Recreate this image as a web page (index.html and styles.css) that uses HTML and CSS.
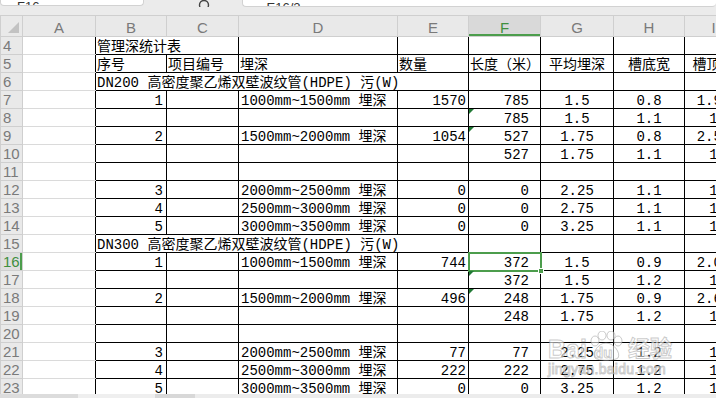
FILE: index.html
```html
<!DOCTYPE html>
<html lang="zh-CN">
<head>
    <meta charset="UTF-8">
    <meta name="viewport" content="width=device-width, initial-scale=1.0">
    <title>管理深统计表</title>
    <link rel="stylesheet" href="styles.css">
</head>
<body>
    <div class="sheet">
        <!-- name box + formula bar, scrolled mostly out of view -->
        <div class="toolbar">
            <div class="namebox"><span>F16</span></div>
            <div class="tools">
                <svg class="fx-icon" width="14" height="14" viewBox="0 0 14 14">
                    <circle cx="6" cy="6" r="4.5" fill="none" stroke="#444" stroke-width="1.4"/>
                    <path d="M9.3 9.3 L13 13" stroke="#444" stroke-width="1.6"/>
                </svg>
            </div>
            <div class="formula"><span>=E16/2</span></div>
        </div>

        <div class="grid-wrap">
            <table class="grid">
                <colgroup>
                    <col class="w-hdr">
                    <col class="w-a">
                    <col class="w-b">
                    <col class="w-c">
                    <col class="w-d">
                    <col class="w-e">
                    <col class="w-f">
                    <col class="w-g">
                    <col class="w-h">
                    <col class="w-i">
                </colgroup>
                <thead>
                    <tr>
                        <th class="corner"></th>
                        <th>A</th>
                        <th>B</th>
                        <th>C</th>
                        <th>D</th>
                        <th>E</th>
                        <th class="active">F</th>
                        <th>G</th>
                        <th>H</th>
                        <th>I</th>
                    </tr>
                </thead>
                <tbody>
                    <tr>
                        <th>4</th><td class="a"></td>
                        <td class="l" colspan="2">管理深统计表</td>
                        <td></td><td></td><td></td><td></td><td></td><td></td>
                    </tr>
                    <tr>
                        <th>5</th><td class="a"></td>
                        <td class="l">序号</td>
                        <td class="l">项目编号</td>
                        <td class="l">埋深</td>
                        <td class="l">数量</td>
                        <td class="l">长度（米）</td>
                        <td class="c">平均埋深</td>
                        <td class="c">槽底宽</td>
                        <td class="c">槽顶宽</td>
                    </tr>
                    <tr>
                        <th>6</th><td class="a"></td>
                        <td class="l" colspan="4">DN200 高密度聚乙烯双壁波纹管(HDPE) 污(W)</td>
                        <td></td><td></td><td></td><td></td>
                    </tr>
                    <tr class="d">
                        <th>7</th><td class="a"></td>
                        <td>1</td><td></td><td>1000mm~1500mm 埋深</td><td>1570</td>
                        <td>785</td><td>1.5</td><td>0.8</td><td>1.95</td>
                    </tr>
                    <tr class="d">
                        <th>8</th><td class="a"></td>
                        <td></td><td></td><td></td><td></td>
                        <td class="note">785</td><td>1.5</td><td>1.1</td><td>1</td>
                    </tr>
                    <tr class="d">
                        <th>9</th><td class="a"></td>
                        <td>2</td><td></td><td>1500mm~2000mm 埋深</td><td>1054</td>
                        <td class="note">527</td><td>1.75</td><td>0.8</td><td>2.55</td>
                    </tr>
                    <tr class="d">
                        <th>10</th><td class="a"></td>
                        <td></td><td></td><td></td><td></td>
                        <td>527</td><td>1.75</td><td>1.1</td><td>1</td>
                    </tr>
                    <tr class="d">
                        <th>11</th><td class="a"></td>
                        <td></td><td></td><td></td><td></td>
                        <td></td><td></td><td></td><td></td>
                    </tr>
                    <tr class="d">
                        <th>12</th><td class="a"></td>
                        <td>3</td><td></td><td>2000mm~2500mm 埋深</td><td>0</td>
                        <td>0</td><td>2.25</td><td>1.1</td><td>1</td>
                    </tr>
                    <tr class="d">
                        <th>13</th><td class="a"></td>
                        <td>4</td><td></td><td>2500mm~3000mm 埋深</td><td>0</td>
                        <td>0</td><td>2.75</td><td>1.1</td><td>1</td>
                    </tr>
                    <tr class="d">
                        <th>14</th><td class="a"></td>
                        <td>5</td><td></td><td>3000mm~3500mm 埋深</td><td>0</td>
                        <td>0</td><td>3.25</td><td>1.1</td><td>1</td>
                    </tr>
                    <tr>
                        <th>15</th><td class="a"></td>
                        <td class="l" colspan="4">DN300 高密度聚乙烯双壁波纹管(HDPE) 污(W)</td>
                        <td></td><td></td><td></td><td></td>
                    </tr>
                    <tr class="d">
                        <th class="active">16</th><td class="a"></td>
                        <td>1</td><td></td><td>1000mm~1500mm 埋深</td><td>744</td>
                        <td class="sel">372</td><td>1.5</td><td>0.9</td><td>2.05</td>
                    </tr>
                    <tr class="d">
                        <th>17</th><td class="a"></td>
                        <td></td><td></td><td></td><td></td>
                        <td class="note">372</td><td>1.5</td><td>1.2</td><td>1</td>
                    </tr>
                    <tr class="d">
                        <th>18</th><td class="a"></td>
                        <td>2</td><td></td><td>1500mm~2000mm 埋深</td><td>496</td>
                        <td class="note">248</td><td>1.75</td><td>0.9</td><td>2.65</td>
                    </tr>
                    <tr class="d">
                        <th>19</th><td class="a"></td>
                        <td></td><td></td><td></td><td></td>
                        <td>248</td><td>1.75</td><td>1.2</td><td>1</td>
                    </tr>
                    <tr class="d">
                        <th>20</th><td class="a"></td>
                        <td></td><td></td><td></td><td></td>
                        <td></td><td></td><td></td><td></td>
                    </tr>
                    <tr class="d">
                        <th>21</th><td class="a"></td>
                        <td>3</td><td></td><td>2000mm~2500mm 埋深</td><td>77</td>
                        <td>77</td><td>2.25</td><td>1.2</td><td>1</td>
                    </tr>
                    <tr class="d">
                        <th>22</th><td class="a"></td>
                        <td>4</td><td></td><td>2500mm~3000mm 埋深</td><td>222</td>
                        <td>222</td><td>2.75</td><td>1.2</td><td>1</td>
                    </tr>
                    <tr class="d">
                        <th>23</th><td class="a"></td>
                        <td>5</td><td></td><td>3000mm~3500mm 埋深</td><td>0</td>
                        <td>0</td><td>3.25</td><td>1.2</td><td>1</td>
                    </tr>
                </tbody>
            </table>

            <!-- jingyan watermark -->
            <div class="watermark">
                <div class="wm-top">
                    <span class="wm-bai">Bai</span>
                    <svg class="wm-paw" width="36" height="30" viewBox="0 0 36 30">
                        <ellipse cx="7" cy="10" rx="4" ry="5" />
                        <ellipse cx="14" cy="4.5" rx="4" ry="4.5" />
                        <ellipse cx="23" cy="4.5" rx="4" ry="4.5" />
                        <ellipse cx="30" cy="10" rx="4" ry="5" />
                        <path d="M18 12 C 10 12, 4 22, 7 27 C 10 30, 26 30, 30 27 C 33 22, 26 12, 18 12 Z" />
                    </svg>
                    <span class="wm-du">du</span>
                    <span class="wm-jy">经验</span>
                </div>
                <div class="wm-url">jingyan.baidu.com</div>
            </div>
        </div>

        <div class="hscroll">
            <div class="seg seg-1"></div>
            <div class="seg seg-2"></div>
            <div class="seg seg-3"></div>
            <div class="seg seg-4"></div>
        </div>
    </div>
</body>
</html>
```

FILE: styles.css
```css
body {
    margin: 0;
    padding: 0;
    background: #ffffff;
    font-family: "Liberation Mono", "Noto Sans CJK SC", monospace;
    color: #000;
}

.sheet {
    width: 716px;
    height: 398px;
    display: flex;
    flex-direction: column;
    overflow: hidden;
}

/* ---- top bar ---- */
.toolbar {
    height: 15px;
    flex: none;
    display: flex;
    align-items: flex-start;
    background: #ebebeb;
}

.namebox,
.formula {
    height: 6px;
    background: #ffffff;
    border: 1px solid #d2d2d2;
    border-top: none;
    border-radius: 0 0 4px 4px;
    overflow: hidden;
    display: flex;
    align-items: flex-end;
}

.namebox {
    width: 144px;
    padding-left: 16px;
    box-sizing: border-box;
}

.formula {
    flex: 1;
    padding-left: 16px;
    border-right: none;
}

.namebox span,
.formula span {
    font: 13px/13px "Liberation Sans", sans-serif;
    color: #333;
    margin-bottom: -8px;
}

.tools {
    width: 98px;
    height: 7px;
    overflow: hidden;
    display: flex;
    align-items: flex-end;
    padding-left: 54px;
    box-sizing: border-box;
}

.fx-icon {
    flex: none;
    margin-bottom: -6px;
}

/* ---- grid ---- */
.grid-wrap {
    flex: 1;
    overflow: hidden;
    position: relative;
}

.grid {
    border-collapse: collapse;
    table-layout: fixed;
    width: 742px;
}

.w-hdr { width: 22px; }
.w-a { width: 73px; }
.w-b { width: 71px; }
.w-c { width: 72px; }
.w-d { width: 159px; }
.w-e { width: 71px; }
.w-f { width: 72px; }
.w-g { width: 73px; }
.w-h { width: 71px; }
.w-i { width: 58px; }

.grid th {
    background: #e9e9e9;
    color: #7a7a7a;
    font: 15px/17px "Liberation Sans", sans-serif;
    font-weight: normal;
    border: 1px solid #cfcfcf;
    padding: 0;
}

.grid thead tr {
    height: 21px;
}

.grid thead th {
    text-align: center;
    vertical-align: bottom;
}

.grid thead th.corner {
    position: relative;
}

.grid thead th.corner::after {
    content: "";
    position: absolute;
    right: 3px;
    bottom: 3px;
    border-style: solid;
    border-width: 0 0 11px 11px;
    border-color: transparent transparent #c2c2c2 transparent;
}

.grid thead th.active {
    background: #d9d9d9;
    color: #3f8f3f;
    box-shadow: inset 0 -2px 0 #4c9d4c;
}

.grid tbody tr {
    height: 18px;
}

.grid tbody th {
    text-align: left;
    padding-left: 2px;
    vertical-align: bottom;
    line-height: 16px;
}

.grid tbody th.active {
    color: #3f8f3f;
    background: #dedede;
    box-shadow: inset -2px 0 0 #4c9d4c;
}

.grid td {
    border: 1px solid #000;
    padding: 0;
    font-size: 14px;
    line-height: 14px;
    vertical-align: bottom;
    white-space: nowrap;
    overflow: hidden;
    position: relative;
}

.grid td.a {
    border-top-color: #dadada;
    border-bottom-color: #dadada;
    border-left-color: #dadada;
}

.grid td.l {
    text-align: left;
    padding-left: 1px;
}

.grid td.c {
    text-align: center;
}

/* data rows: B right, D left, E right, F right with indent, G-I centred */
.d td:nth-child(3) { text-align: right; padding-right: 3px; }
.d td:nth-child(5) { text-align: left; padding-left: 2px; }
.d td:nth-child(6) { text-align: right; padding-right: 2px; }
.d td:nth-child(7) { text-align: right; padding-right: 11px; }
.d td:nth-child(8),
.d td:nth-child(9),
.d td:nth-child(10) { text-align: center; }

/* green "number stored as text" marker */
.grid td.note::before {
    content: "";
    position: absolute;
    left: 0;
    top: 0;
    border-style: solid;
    border-width: 5px 5px 0 0;
    border-color: #217a35 transparent transparent transparent;
}

/* active cell */
.grid td.sel {
    overflow: visible;
}

.grid td.sel::after {
    content: "";
    position: absolute;
    left: -1px;
    top: -1px;
    right: -2px;
    bottom: -2px;
    border: 2px solid #4c9d4c;
}

.grid td.sel::before {
    content: "";
    position: absolute;
    right: -4px;
    bottom: -4px;
    width: 4px;
    height: 4px;
    background: #4c9d4c;
    border: 1px solid #fff;
    z-index: 2;
}

/* ---- watermark ---- */
.watermark {
    position: absolute;
    left: 548px;
    top: 302px;
    width: 140px;
    pointer-events: none;
}

.wm-top {
    display: flex;
    align-items: flex-end;
    height: 44px;
    position: relative;
}

.wm-bai,
.wm-jy,
.wm-du,
.wm-url {
    color: rgba(255, 255, 255, 0.6);
    -webkit-text-stroke: 1px rgba(150, 150, 150, 0.5);
    font-family: "Liberation Sans", "Noto Sans CJK SC", sans-serif;
    font-weight: bold;
}

.wm-bai {
    font-size: 25px;
    line-height: 24px;
}

.wm-paw {
    margin-left: 1px;
    fill: rgba(255, 255, 255, 0.55);
    stroke: rgba(150, 150, 150, 0.5);
    stroke-width: 1;
}

.wm-du {
    position: absolute;
    left: 46px;
    bottom: 1px;
    font-size: 15px;
    line-height: 15px;
}

.wm-jy {
    font-size: 22px;
    line-height: 24px;
    margin-left: 4px;
}

.wm-url {
    font-size: 14px;
    line-height: 16px;
    font-weight: normal;
    letter-spacing: 0.3px;
}

/* ---- bottom scroll strip ---- */
.hscroll {
    height: 4px;
    flex: none;
    display: flex;
    background: #e4e4e4;
}

.seg-1 { width: 78px; background: #dcdcdc; }
.seg-2 { width: 77px; background: #efefef; }
.seg-3 { width: 40px; background: #d8d8d8; }
.seg-4 { flex: 1; background: #ececec; }
```
